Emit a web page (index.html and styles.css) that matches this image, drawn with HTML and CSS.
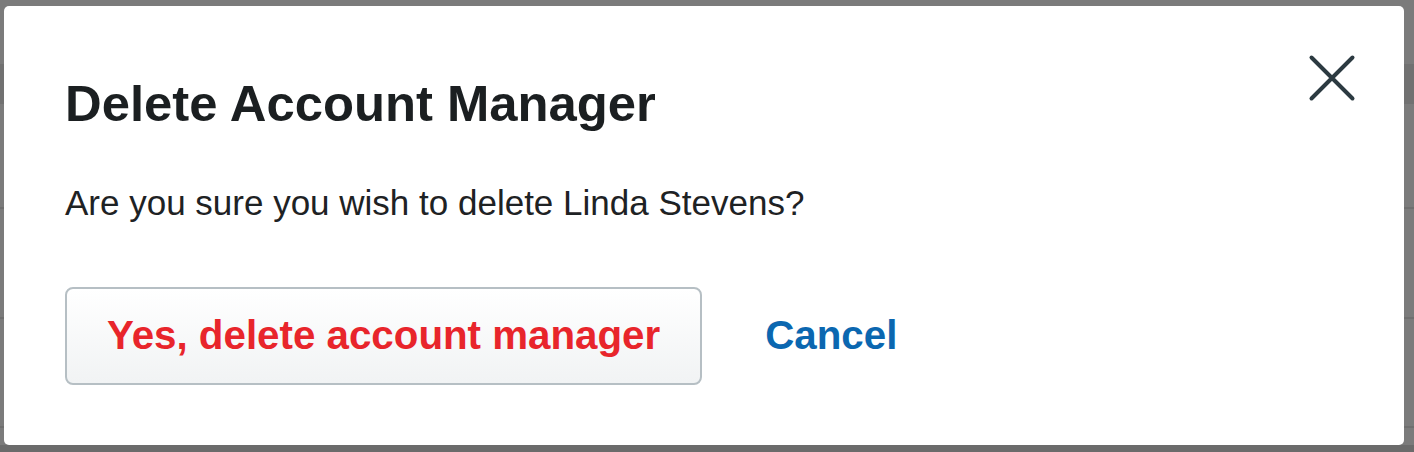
FILE: index.html
```html
<!DOCTYPE html>
<html lang="en">
<head>
<meta charset="utf-8">
<title>Delete Account Manager</title>
<link rel="stylesheet" href="styles.css">
</head>
<body>
<div class="modal" role="dialog" aria-labelledby="dlg-title">
  <button class="close" aria-label="Close">
    <svg width="48" height="48" viewBox="0 0 48 48" aria-hidden="true">
      <path d="M3.5 3.5 L44.5 44.5 M44.5 3.5 L3.5 44.5" stroke="#2c3a41" stroke-width="4" stroke-linecap="round" fill="none"/>
    </svg>
  </button>
  <h2 class="title" id="dlg-title">Delete Account Manager</h2>
  <p class="message">Are you sure you wish to delete Linda Stevens?</p>
  <div class="actions">
    <button class="btn-danger">Yes, delete account manager</button>
    <a class="link-cancel" href="#">Cancel</a>
  </div>
</div>
</body>
</html>
```

FILE: styles.css
```css
html, body {
  margin: 0;
  padding: 0;
}
body {
  width: 1414px;
  height: 452px;
  overflow: hidden;
  font-family: "Liberation Sans", Arial, Helvetica, sans-serif;
  background: linear-gradient(to bottom,
    #7b7b7b 0 64px,
    #717171 64px 104px,
    #7b7b7b 104px 207px,
    #6f6f6f 207px 209px,
    #7b7b7b 209px 317px,
    #6f6f6f 317px 319px,
    #7b7b7b 319px 426px,
    #6f6f6f 426px 428px,
    #7b7b7b 428px 445px,
    #6b6b6b 445px);
}
.modal {
  position: relative;
  box-sizing: border-box;
  width: 1400px;
  height: 439px;
  margin: 6px 0 0 4px;
  padding: 68px 60px 60px 61px;
  background: #ffffff;
  border-radius: 5px;
  display: flex;
  flex-direction: column;
}
.close {
  position: absolute;
  top: 48px;
  right: 48px;
  width: 48px;
  height: 48px;
  padding: 0;
  border: 0;
  background: transparent;
  cursor: pointer;
}
.close svg {
  display: block;
}
.title {
  margin: 0;
  font-size: 50.8px;
  line-height: 60px;
  font-weight: 700;
  color: #1b1f21;
}
.message {
  margin: 48px 0 0;
  font-size: 35px;
  line-height: 42px;
  color: #1e2224;
}
.actions {
  margin-top: 63px;
  display: flex;
  align-items: center;
  gap: 63px;
}
.btn-danger {
  box-sizing: border-box;
  height: 98px;
  padding: 24px 40px;
  border: 2px solid #b6bfc4;
  border-radius: 8px;
  background: linear-gradient(to bottom, #ffffff, #f1f3f4);
  font-family: inherit;
  font-size: 40.3px;
  line-height: 46px;
  font-weight: 700;
  color: #e8252b;
  cursor: pointer;
}
.link-cancel {
  font-size: 40.3px;
  line-height: 46px;
  font-weight: 700;
  color: #0b67b0;
  text-decoration: none;
}
```
